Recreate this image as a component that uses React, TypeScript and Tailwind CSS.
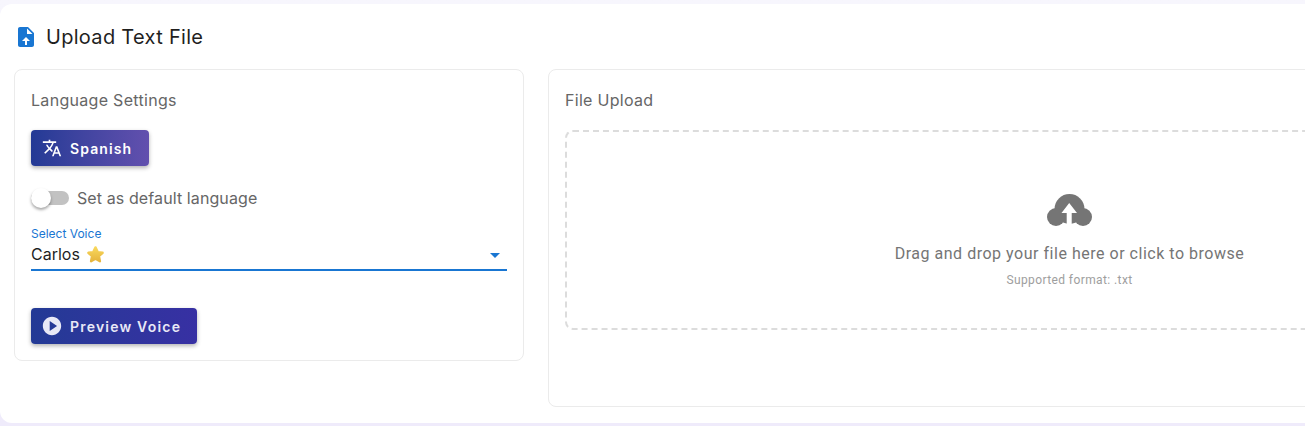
const filePath =
  'M14 2H6c-1.1 0-1.99.9-1.99 2L4 20c0 1.1.89 2 1.99 2H18c1.1 0 2-.9 2-2V8l-6-6zm-1 7V3.5L18.5 9H13zm0 7v4h-2v-4H8l4-4 4 4h-3z'
const translatePath =
  'M12.87 15.07l-2.54-2.51.03-.03c1.74-1.94 2.98-4.17 3.71-6.53H17V4h-7V2H8v2H1v1.99h11.17C11.5 7.92 10.44 9.75 9 11.35 8.07 10.32 7.3 9.19 6.69 8h-2c.73 1.63 1.73 3.17 2.98 4.56l-5.09 5.02L4 19l5-5 3.11 3.11.76-2.04zM18.5 10h-2L12 22h2l1.12-3h4.75L21 22h2l-4.5-12zm-2.62 7l1.62-4.33L19.12 17h-3.24z'
const playPath =
  'M12 2C6.48 2 2 6.48 2 12s4.48 10 10 10 10-4.48 10-10S17.52 2 12 2zm-2.5 15.5v-11l8 5.5-8 5.5z'

const Icon = ({ d, className }: { d: string; className: string }) => (
  <svg viewBox="0 0 24 24" fill="currentColor" className={className}>
    <path fillRule="evenodd" d={d} />
  </svg>
)

const Cloud = () => (
  <svg viewBox="0 0 45 32" className="w-[45px] h-8 shrink-0">
    <g fill="#757575">
      <circle cx="22.5" cy="15" r="15" />
      <circle cx="9" cy="23" r="9" />
      <circle cx="36" cy="23" r="9" />
    </g>
    <path fill="#ffffff" d="M22.2 9L30 19h-5.3v13h-5V19h-5.2z" />
  </svg>
)

const Star = () => (
  <svg viewBox="0 0 24 24" className="w-[19px] h-[19px]">
    <defs>
      <linearGradient id="star" x1="0" y1="0" x2="0" y2="1">
        <stop offset="0" stopColor="#f8d75c" />
        <stop offset="1" stopColor="#e6b53d" />
      </linearGradient>
    </defs>
    <path
      fill="url(#star)"
      stroke="url(#star)"
      strokeWidth="3"
      strokeLinejoin="round"
      d="M12 3l2.8 6 6.2.8-4.6 4.3 1.2 6.4L12 17.3l-5.6 3.2 1.2-6.4L3 9.8 9.2 9z"
    />
  </svg>
)

export default function App() {
  return (
    <div className="w-[1305px] h-[426px] overflow-hidden bg-gradient-to-b from-[#f7f6fd] to-[#efebfb] pt-1 font-['Inter',sans-serif]">
      <div className="w-[1700px] h-[419px] bg-white rounded-xl px-3.5 pt-[21px]">
        <div className="flex items-center gap-2 h-6">
          <Icon d={filePath} className="w-6 h-6 text-[#1976d2]" />
          <h1 className="text-xl leading-6 tracking-[0.3px] text-[#1f1f1f]">Upload Text File</h1>
        </div>

        <div className="flex items-start gap-6 mt-5">
          <section className="w-[510px] h-[292px] shrink-0 border border-[#ebebeb] rounded-lg px-4 pt-[20px]">
            <h2 className="text-base leading-5 tracking-[0.3px] text-[#666666]">Language Settings</h2>

            <button className="mt-5 flex items-center gap-2 h-9 w-[118px] pl-[11px] rounded bg-gradient-to-r from-[#233a95] to-[#6250ae] text-white text-sm font-semibold tracking-[1.1px] shadow-[0_2px_4px_rgba(0,0,0,0.3)]">
              <Icon d={translatePath} className="w-5 h-5" />
              <span className="mt-0.5">Spanish</span>
            </button>

            <div className="mt-5 flex items-center h-6">
              <div className="relative w-[38px] h-3.5 rounded-full bg-[#c2c2c2]">
                <div className="absolute left-0 -top-[3px] w-5 h-5 rounded-full bg-white shadow-[0_2px_3px_rgba(0,0,0,0.35)]" />
              </div>
              <span className="ml-2 text-base tracking-[0.1px] text-[#666666]">Set as default language</span>
            </div>

            <div className="mt-4 w-[476px] h-[45px] border-b-2 border-[#1976d2]">
              <div className="text-xs leading-[15px] text-[#1976d2]">Select Voice</div>
              <div className="mt-px flex items-center justify-between h-6">
                <div className="flex items-center gap-[6px] text-base text-[#1f1f1f]">
                  Carlos
                  <Star />
                </div>
                <svg viewBox="0 0 24 24" fill="#1976d2" className="w-6 h-6 mt-0.5">
                  <path d="M7 10l5 5 5-5z" />
                </svg>
              </div>
            </div>

            <button className="mt-[37px] flex items-center gap-[7px] h-9 w-[166px] pl-[10px] rounded bg-gradient-to-r from-[#233a95] to-[#3730a3] text-[#e8e8f6] text-sm font-semibold tracking-[1.2px] shadow-[0_2px_4px_rgba(0,0,0,0.3)]">
              <Icon d={playPath} className="w-[22px] h-[22px]" />
              <span className="mt-0.5">Preview Voice</span>
            </button>
          </section>

          <section className="w-[1041px] h-[338px] shrink-0 border border-[#ebebeb] rounded-lg px-4 pt-[20px]">
            <h2 className="text-base leading-5 tracking-[0.3px] text-[#666666]">File Upload</h2>
            <div className="mt-5 w-[1009px] h-[200px] border-2 border-dashed border-[#dcdcdc] rounded-lg flex flex-col items-center pt-[62px] font-['Roboto',sans-serif]">
              <Cloud />
              <p className="mt-4 text-base leading-6 tracking-[0.52px] text-[#757575]">Drag and drop your file here or click to browse</p>
              <p className="mt-1.5 text-xs leading-4 tracking-[0.4px] text-[#9e9e9e]">Supported format: .txt</p>
            </div>
          </section>
        </div>
      </div>
    </div>
  )
}
